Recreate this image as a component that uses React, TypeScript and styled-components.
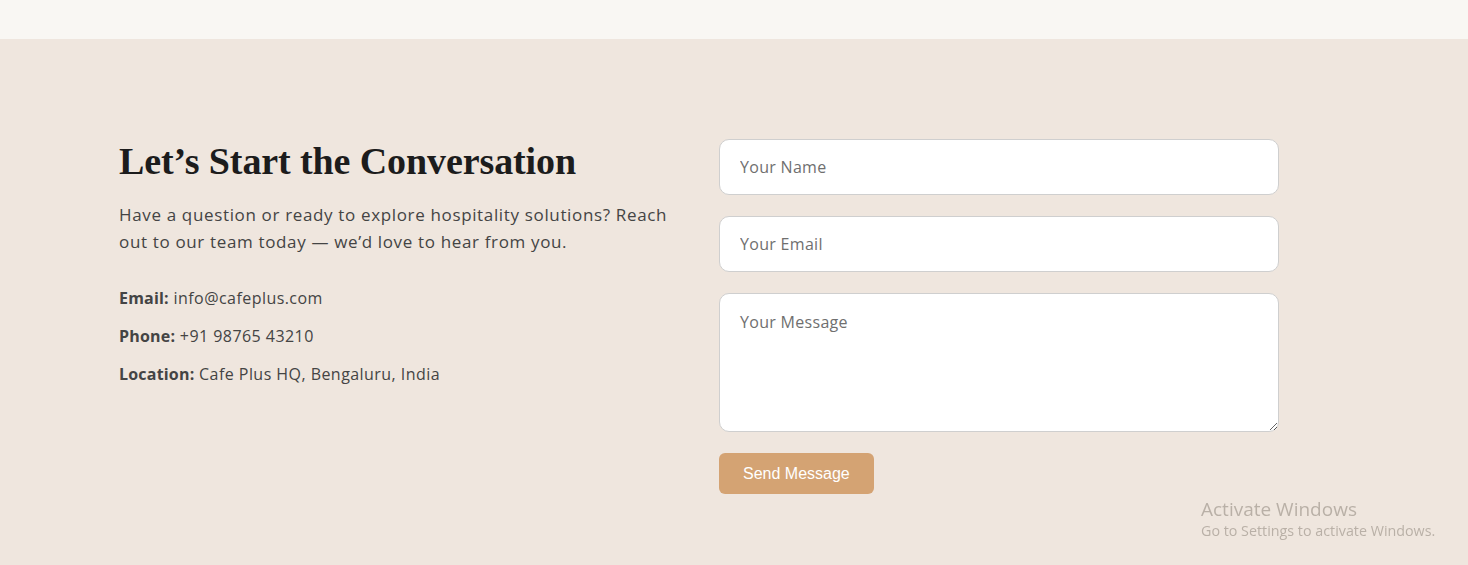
import styled, { createGlobalStyle } from 'styled-components'

const GlobalStyle = createGlobalStyle`
  body {
    margin: 0;
    background: #efe6de;
    font-family: "Open Sans", "Liberation Sans", sans-serif;
  }
`

const TopStrip = styled.div`
  height: 39px;
  background-color: #f9f7f3;
`

const Section = styled.section`
  background-color: #efe6de;
  padding: 100px 0 70px;
  min-height: 526px;
  box-sizing: border-box;
`

const Container = styled.div`
  width: 1160px;
  margin-left: 119px;
  display: grid;
  grid-template-columns: 560px 560px;
  column-gap: 40px;
`

const Info = styled.div``

const Heading = styled.h2`
  margin: 0 0 18px;
  font-family: "Liberation Serif", "DejaVu Serif", serif;
  font-weight: 700;
  font-size: 38px;
  line-height: 44px;
  color: #1c1c1c;
  letter-spacing: -0.1px;
`

const Lead = styled.p`
  max-width: 556px;
  margin: 0 0 31px;
  font-size: 17px;
  line-height: 27px;
  letter-spacing: 0.65px;
  color: #444;
`

const Detail = styled.p`
  margin: 0 0 14px;
  font-size: 16px;
  line-height: 24px;
  letter-spacing: 0.45px;
  color: #444;

  strong {
    font-weight: 700;
    letter-spacing: 0.2px;
  }
`

const Form = styled.form`
  display: flex;
  flex-direction: column;
  gap: 21px;
`

const Field = styled.input`
  height: 56px;
  box-sizing: border-box;
  padding: 0 20px;
  border: 1px solid #cfcfcf;
  border-radius: 10px;
  background: #fff;
  font-family: inherit;
  font-size: 16px;
  letter-spacing: 0.3px;
  color: #333;

  &::placeholder {
    color: #6f6f6f;
  }
`

const MessageBox = styled.textarea`
  height: 139px;
  box-sizing: border-box;
  padding: 17px 20px;
  border: 1px solid #cfcfcf;
  border-radius: 10px;
  background: #fff;
  font-family: inherit;
  font-size: 16px;
  line-height: 22px;
  letter-spacing: 0.3px;
  color: #333;
  resize: vertical;

  &::placeholder {
    color: #6f6f6f;
  }
`

const SendButton = styled.button`
  align-self: flex-start;
  height: 41px;
  padding: 0 24px;
  border: none;
  border-radius: 6px;
  background-color: #d4a373;
  color: #fff;
  font-family: "Liberation Sans", Arial, sans-serif;
  font-size: 16px;
  cursor: pointer;
`

const Watermark = styled.div`
  position: fixed;
  left: 1201px;
  top: 497px;
  font-family: "Open Sans", "Noto Sans", sans-serif;
  color: rgba(120, 110, 100, 0.45);
  pointer-events: none;
`

const WatermarkTitle = styled.div`
  font-size: 19px;
  line-height: 24px;
`

const WatermarkNote = styled.div`
  font-size: 14.3px;
  line-height: 20px;
`

const App = () => {
  return (
    <>
      <GlobalStyle />
      <TopStrip />
      <Section>
        <Container>
          <Info>
            <Heading>Let’s Start the Conversation</Heading>
            <Lead>
              Have a question or ready to explore hospitality solutions? Reach
              out to our team today — we’d love to hear from you.
            </Lead>
            <Detail><strong>Email:</strong> info@cafeplus.com</Detail>
            <Detail><strong>Phone:</strong> +91 98765 43210</Detail>
            <Detail><strong>Location:</strong> Cafe Plus HQ, Bengaluru, India</Detail>
          </Info>
          <Form onSubmit={(e) => e.preventDefault()}>
            <Field type="text" placeholder="Your Name" />
            <Field type="email" placeholder="Your Email" />
            <MessageBox placeholder="Your Message" />
            <SendButton type="submit">Send Message</SendButton>
          </Form>
        </Container>
      </Section>
      <Watermark>
        <WatermarkTitle>Activate Windows</WatermarkTitle>
        <WatermarkNote>Go to Settings to activate Windows.</WatermarkNote>
      </Watermark>
    </>
  )
}

export default App
